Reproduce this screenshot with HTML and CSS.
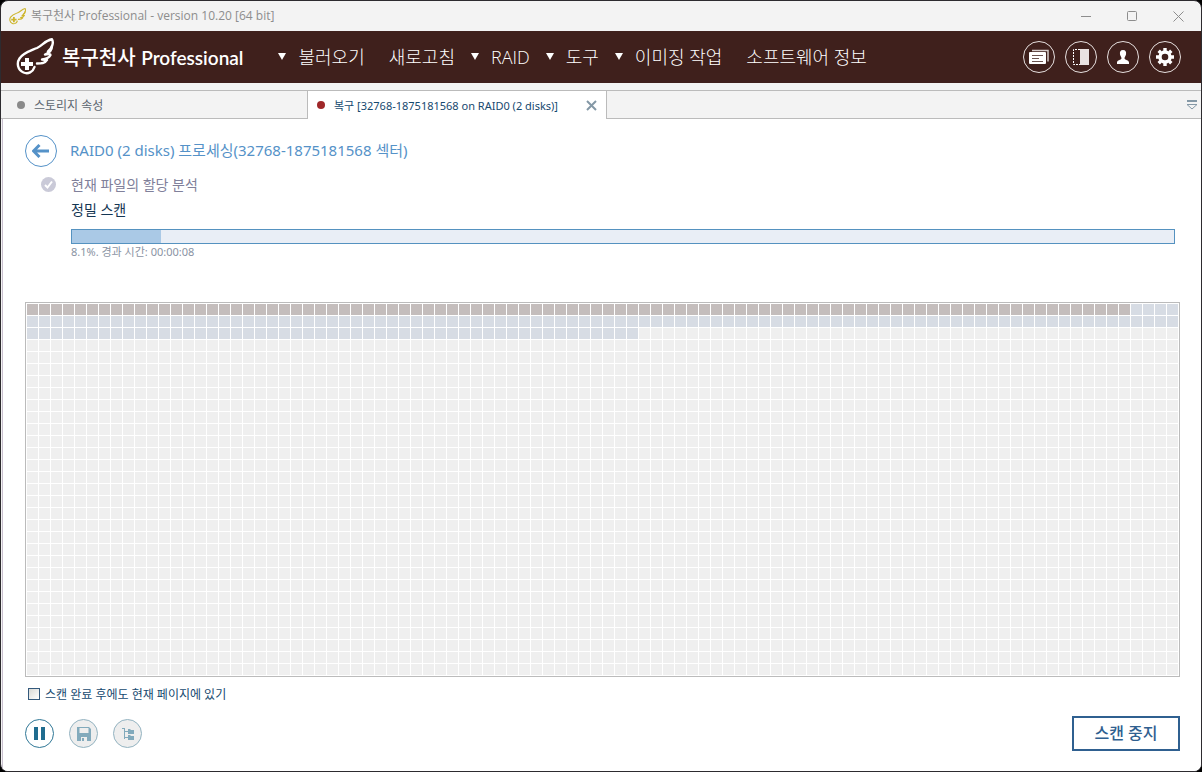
FILE: index.html
```html
<!DOCTYPE html>
<html lang="ko">
<head>
    <meta charset="UTF-8">
    <meta name="viewport" content="width=device-width, initial-scale=1.0">
    <title>복구천사 Professional</title>
    <link rel="stylesheet" href="styles.css">
</head>
<body>
    <!-- wing logo, used in the title bar and the header -->
    <svg class="defs" width="0" height="0" aria-hidden="true">
        <symbol id="wing" viewBox="0 0 38 38">
            <g fill="none" stroke="currentColor" stroke-linecap="round" stroke-linejoin="round">
                <path stroke-width="2.4" d="M18.5 29C17 34 12 36.5 7.5 34.5C1.5 32 0.5 25 3.5 20.5C7 15 14 13 21 10C27 7 29 2.5 36 1.3C38 5 36 10 32 13.5"/>
                <path stroke-width="2.4" d="M36 8C36 12 33 15 29 16.5C33 16 34.5 16 34.5 17C33 20 30 21 26 21.5C29 21.5 31 22 31 22C29 25.5 25 25.5 21 25.5"/>
            </g>
            <path fill="currentColor" d="M9 20h4v4h4v4h-4v4h-4v-4h-4v-4h4z"/>
        </symbol>
    </svg>
    <div class="window">
        <div class="titlebar">
            <svg class="app-icon" width="17" height="17"><use href="#wing"/></svg>
            <span class="app-title">복구천사 Professional - version 10.20 [64 bit]</span>
            <div class="win-controls">
                <button aria-label="최소화"><svg width="11" height="11"><path d="M0 5.5h10"/></svg></button>
                <button aria-label="최대화"><svg width="11" height="11"><rect x="0.5" y="0.5" width="9" height="9" rx="1"/></svg></button>
                <button aria-label="닫기"><svg width="11" height="11"><path d="M0.5 0.5l10 10M10.5 0.5l-10 10"/></svg></button>
            </div>
        </div>

        <header class="header">
            <svg class="logo" width="38" height="38"><use href="#wing"/></svg>
            <h1>복구천사 <span class="edition">Professional</span></h1>
            <nav class="menu">
                <button class="drop">불러오기</button>
                <button>새로고침</button>
                <button class="drop">RAID</button>
                <button class="drop">도구</button>
                <button class="drop">이미징 작업</button>
                <button>소프트웨어 정보</button>
            </nav>
            <div class="tools">
                <button aria-label="로그">
                    <svg width="20" height="16" viewBox="0 0 20 16">
                        <path d="M3 1.5h16v11" fill="none" stroke="#d8cfcd" stroke-width="1.5"/>
                        <rect x="0" y="3" width="17" height="12" rx="1" fill="#fff"/>
                        <path d="M3 6.5h11M3 9.5h7M3 12.5h11" stroke="#6b5350"/>
                    </svg>
                </button>
                <button aria-label="패널">
                    <svg width="16" height="16" viewBox="0 0 16 16">
                        <path d="M7 0.5H0.5v15H7" fill="none" stroke="#fff" stroke-dasharray="2 1"/>
                        <rect x="7" width="9" height="16" fill="#e9e2e1"/>
                    </svg>
                </button>
                <button aria-label="사용자">
                    <svg width="14" height="16" viewBox="0 0 14 16">
                        <path fill="#fff" d="M7 1C9.5 1 10.5 3 10 5.5C9.7 7 8.5 8 8.5 9.5C9 11 13 11 13 13.5V15H1v-1.5C1 11 5 11 5.5 9.5C5.5 8 4.3 7 4 5.5C3.5 3 4.5 1 7 1z"/>
                    </svg>
                </button>
                <button aria-label="설정">
                    <svg width="18" height="18" viewBox="-9 -9 18 18">
                        <circle r="5" fill="none" stroke="#fff" stroke-width="3.4"/>
                        <path stroke="#fff" stroke-width="3.4" d="M0 -9v3M0 9v-3M-9 0h3M9 0h-3M-6.3 -6.3l2 2M6.3 6.3l-2 -2M6.3 -6.3l-2 2M-6.3 6.3l2 -2"/>
                    </svg>
                </button>
            </div>
        </header>

        <div class="tabs">
            <button class="tab"><i class="dot"></i>스토리지 속성</button>
            <div class="tab active">
                <i class="dot"></i><span>복구 [32768-1875181568 on RAID0 (2 disks)]</span>
                <button class="close" aria-label="탭 닫기"><svg width="11" height="11"><path d="M1 1l9 9M10 1l-9 9"/></svg></button>
            </div>
            <button class="tab-list" aria-label="탭 목록">
                <svg width="12" height="10"><path d="M1 1h10" stroke-width="2"/><path d="M1 4.5h10L6 9z"/></svg>
            </button>
        </div>

        <main class="page">
            <div class="heading">
                <button class="back" aria-label="뒤로"><svg width="18" height="14"><path d="M17 7H1M7.5 1L1.5 7l6 6"/></svg></button>
                <h2>RAID0 (2 disks) 프로세싱(32768-1875181568 섹터)</h2>
            </div>
            <div class="steps">
                <div class="step done">
                    <svg width="15" height="15"><circle cx="7.5" cy="7.5" r="7.5" fill="#cacad8"/><path d="M4 8l2.5 2.5L11 4.5" fill="none" stroke="#fff" stroke-width="2"/></svg>
                    <span>현재 파일의 할당 분석</span>
                </div>
                <div class="step">정밀 스캔</div>
                <div class="progress" role="progressbar" aria-valuenow="8.1" aria-valuemin="0" aria-valuemax="100">
                    <div class="bar" style="width: 8.1%"></div>
                </div>
                <div class="elapsed">8.1%. 경과 시간: 00:00:08</div>
            </div>

            <div class="blocks" id="blocks"></div>

            <label class="stay"><input type="checkbox">스캔 완료 후에도 현재 페이지에 있기</label>

            <div class="actions">
                <button class="round" aria-label="일시 정지"><svg width="11" height="13"><path d="M0 0h4v13H0zM7 0h4v13H7z"/></svg></button>
                <button class="round" aria-label="저장" disabled>
                    <svg width="14" height="14"><path fill-rule="evenodd" d="M0 0h12l2 2v12H0zM2.5 1v5h9V1zM4 10v4h6v-4zM5 11h2v3H5z"/></svg>
                </button>
                <button class="round" aria-label="트리" disabled>
                    <svg width="14" height="14"><path d="M1 1h3v1H1zM3 1h1v11H3zM3 4h4v1H3zM3 10h4v1H3zM7 2h2l1 1h3v4H7zM7 8h2l1 1h3v4H7z"/></svg>
                </button>
                <button class="stop">스캔 중지</button>
            </div>
        </main>
    </div>
    <script src="script.js"></script>
</body>
</html>
```

FILE: styles.css
```css
* {
    box-sizing: border-box;
}
body {
    margin: 0;
    background: #000;
    font-family: "Noto Sans", "Noto Sans CJK KR", sans-serif;
    color: #16496f;
}
button {
    font: inherit;
    color: inherit;
    background: none;
    border: none;
    padding: 0;
}
h1, h2 {
    margin: 0;
    font-weight: normal;
}
svg {
    display: block;
    flex: none;
}
.defs {
    position: absolute;
}
.window {
    display: flex;
    flex-direction: column;
    min-height: 100vh;
    border: 1px solid #2d2b2f;
    border-radius: 8px;
    overflow: hidden;
    background: #f3f3f3;
}

/* title bar */
.titlebar {
    display: flex;
    align-items: center;
    height: 30px;
    padding-left: 8px;
    font-family: "Open Sans", "Noto Sans CJK KR", sans-serif;
    font-size: 12px;
    color: #8d8d8d;
}
.app-icon {
    color: #cdb52c;
    margin-right: 5px;
}
.app-title {
    padding-bottom: 2px;
}
.win-controls {
    display: flex;
    margin-left: auto;
}
.win-controls button {
    display: flex;
    justify-content: center;
    align-items: center;
    width: 46px;
    height: 30px;
}
.win-controls svg {
    fill: none;
    stroke: #8d8d8d;
}

/* header */
.header {
    display: flex;
    align-items: center;
    height: 52px;
    padding: 0 20px 0 15px;
    background: #3f201c;
    color: #fff;
}
.header h1 {
    margin-left: 8px;
    font-family: "Noto Sans CJK KR", sans-serif;
    font-size: 20px;
    font-weight: 500;
    line-height: 28px;
    white-space: nowrap;
}
.edition {
    font-family: Lato, sans-serif;
    font-size: 19px;
    font-weight: 600;
}
.menu {
    display: flex;
    margin-left: 11px;
    font-family: "Open Sans", "Noto Sans CJK KR", sans-serif;
    font-size: 18px;
    font-weight: 300;
    line-height: 26px;
    white-space: nowrap;
}
.menu button {
    margin-left: 24px;
}
.menu .drop {
    margin-left: 16px;
}
.menu .drop:first-child {
    margin-left: 24px;
}
.menu .drop::before {
    content: "";
    display: inline-block;
    border: 4px solid transparent;
    border-top: 7px solid #fff;
    border-bottom: 0;
    margin-right: 12px;
    vertical-align: 4px;
}
.tools {
    display: flex;
    gap: 10px;
    margin-left: auto;
}
.tools button {
    display: flex;
    align-items: center;
    justify-content: center;
    width: 32px;
    height: 32px;
    border: 1px solid #e6dfde;
    border-radius: 50%;
}

/* tabs */
.tabs {
    display: flex;
    height: 29px;
    margin-top: 7px;
    padding-left: 3px;
    border-top: 1px solid #bbb;
    box-shadow: inset 0 -1px #bbb;
    font-size: 12px;
}
.tab {
    display: flex;
    align-items: center;
    width: 303px;
    padding: 0 9px 0 13px;
    color: #5c6670;
}
.tab.active {
    width: 300px;
    padding-left: 9px;
    background: #fff;
    border: solid #bbb;
    border-width: 0 1px;
    font-size: 11px;
    color: #16496f;
}
.dot {
    width: 8px;
    height: 8px;
    margin-right: 9px;
    border-radius: 50%;
    background: #8a8a8a;
}
.active .dot {
    background: #9f2729;
}
.close {
    margin-left: auto;
}
.close svg {
    fill: none;
    stroke: #8498a6;
    stroke-width: 2;
}
.tab-list {
    margin-left: auto;
    padding-right: 3px;
}
.tab-list svg {
    fill: none;
    stroke: #8498a6;
}

/* page */
.page {
    display: flex;
    flex-direction: column;
    flex: 1;
    margin-left: 1px;
    padding: 16px 21px 20px 22px;
    border-left: 1px solid #c9c0cf;
    background: #fff;
}
.heading {
    display: flex;
    align-items: center;
    gap: 13px;
}
.heading h2 {
    padding-bottom: 4px;
    font-size: 15px;
    color: #5592c8;
}
.back {
    display: flex;
    align-items: center;
    justify-content: center;
    width: 32px;
    height: 32px;
    border: 1px solid #5592c8;
    border-radius: 50%;
}
.back svg {
    fill: none;
    stroke: #5592c8;
    stroke-width: 3;
}
.steps {
    margin: 5px 5px 0 46px;
}
.step {
    height: 25px;
    font-size: 14px;
    line-height: 25px;
    color: #143653;
}
.step.done {
    display: flex;
    align-items: center;
    gap: 15px;
    margin-left: -30px;
    color: #80809a;
}
.progress {
    height: 15px;
    margin-top: 7px;
    border: 1px solid #5592c0;
    background: #e9eef6;
}
.bar {
    height: 100%;
    background: #aac9e6;
}
.elapsed {
    font-size: 11px;
    line-height: 16px;
    color: #8a93a3;
}
.blocks {
    display: grid;
    grid-template-columns: repeat(auto-fill, 11px);
    grid-auto-rows: 11px;
    gap: 1px;
    margin-top: 42px;
    padding: 1px;
    border: 1px solid #bbb;
}
.blocks i {
    background: #efefef;
}
.blocks .read {
    background: #c4bdbc;
}
.blocks .queued {
    background: #d7dce4;
}
.stay {
    display: flex;
    align-items: center;
    align-self: flex-start;
    gap: 5px;
    height: 16px;
    margin: 9px 0 0 3px;
    font-size: 12px;
}
.stay input {
    appearance: none;
    width: 12px;
    height: 12px;
    margin: 0;
    border: 1px solid #34597c;
    background: linear-gradient(135deg, #d9d9d5, #fff);
}
.actions {
    display: flex;
    align-items: center;
    gap: 15px;
    margin-top: auto;
}
.round {
    display: flex;
    align-items: center;
    justify-content: center;
    width: 29px;
    height: 29px;
    border: 1px solid #2f7796;
    border-radius: 50%;
    color: #1f6c8f;
}
.round:disabled {
    border-color: #93b3c1;
    background: #eee;
    color: #82aabc;
}
.round svg {
    fill: currentColor;
}
.stop {
    width: 108px;
    height: 35px;
    margin-left: auto;
    padding-bottom: 4px;
    border: 2px solid #2f6090;
    font-size: 16px;
    font-weight: 500;
    color: #2f6090;
}
```

FILE: script.js
```js
// disk map: scanned blocks first, then the ones already queued
const total = 2976;
const read = 92;
const queued = 243;
const blocks = document.getElementById("blocks");

for (let i = 0; i < total; i++) {
    const block = document.createElement("i");
    if (i < read) {
        block.className = "read";
    } else if (i < queued) {
        block.className = "queued";
    }
    blocks.appendChild(block);
}
```
